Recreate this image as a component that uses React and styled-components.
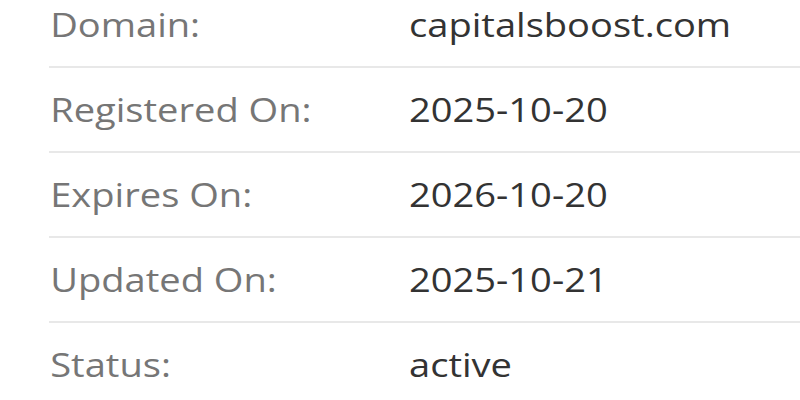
import React from "react";
import styled, { createGlobalStyle } from "styled-components";

const Global = createGlobalStyle`
  html, body { margin: 0; padding: 0; background: #fff; }
  body { font-family: "Open Sans", "Liberation Sans", sans-serif; overflow: hidden; }
`;

const Page = styled.div`
  width: 800px;
  height: 400px;
  overflow: hidden;
  background: #fff;
`;

const Table = styled.div`
  margin-top: -17px;
  padding-left: 49px;
  display: flex;
  flex-direction: column;
`;

const Row = styled.div`
  display: grid;
  grid-template-columns: 360px 1fr;
  align-items: center;
  height: 83px;
  border-bottom: 2px solid ${(p) => (p.$last ? "transparent" : "#e8e8e8")};
`;

const Cell = styled.div`
  font-size: 32px;
  line-height: 43px;
  white-space: nowrap;
  transform: scaleX(1.19);
  transform-origin: left center;
`;

const Label = styled(Cell)`
  color: #767676;
  padding-left: 1px;
`;

const Value = styled(Cell)`
  color: #333;
`;

const rows = [
  ["Domain:", "capitalsboost.com"],
  ["Registered On:", "2025-10-20"],
  ["Expires On:", "2026-10-20"],
  ["Updated On:", "2025-10-21"],
  ["Status:", "active"],
];

export default function App() {
  return (
    <Page>
      <Global />
      <Table>
        {rows.map(([l, v], i) => (
          <Row key={l} $last={i === rows.length - 1}>
            <Label>{l}</Label>
            <Value>{v}</Value>
          </Row>
        ))}
      </Table>
    </Page>
  );
}
